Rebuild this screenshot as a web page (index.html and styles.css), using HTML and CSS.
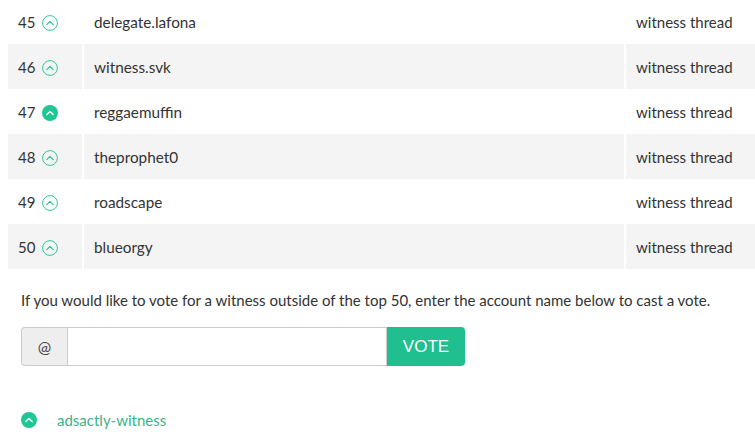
FILE: index.html
```html
<!DOCTYPE html>
<html>
<head>
<meta charset="utf-8">
<link rel="stylesheet" href="styles.css">
</head>
<body>
<div class="page">
  <table class="witnesses">
    <tbody>
      <tr>
        <td class="rank">45 <span class="vote"><svg viewBox="0 0 16 16"><circle cx="8" cy="8" r="7.4" fill="none" stroke="#2ec89c" stroke-width="1"/><path d="M4.8 9.6 L8 6.4 L11.2 9.6" fill="none" stroke="#2ec89c" stroke-width="1.3" stroke-linecap="round" stroke-linejoin="round"/></svg></span></td>
        <td class="name">delegate.lafona</td>
        <td class="thread">witness thread</td>
      </tr>
      <tr class="alt">
        <td class="rank">46 <span class="vote"><svg viewBox="0 0 16 16"><circle cx="8" cy="8" r="7.4" fill="none" stroke="#2ec89c" stroke-width="1"/><path d="M4.8 9.6 L8 6.4 L11.2 9.6" fill="none" stroke="#2ec89c" stroke-width="1.3" stroke-linecap="round" stroke-linejoin="round"/></svg></span></td>
        <td class="name">witness.svk</td>
        <td class="thread">witness thread</td>
      </tr>
      <tr>
        <td class="rank">47 <span class="vote"><svg viewBox="0 0 16 16"><circle cx="8" cy="8" r="8" fill="#1fc795"/><path d="M4.8 9.6 L8 6.4 L11.2 9.6" fill="none" stroke="#fff" stroke-width="1.4" stroke-linecap="round" stroke-linejoin="round"/></svg></span></td>
        <td class="name">reggaemuffin</td>
        <td class="thread">witness thread</td>
      </tr>
      <tr class="alt">
        <td class="rank">48 <span class="vote"><svg viewBox="0 0 16 16"><circle cx="8" cy="8" r="7.4" fill="none" stroke="#2ec89c" stroke-width="1"/><path d="M4.8 9.6 L8 6.4 L11.2 9.6" fill="none" stroke="#2ec89c" stroke-width="1.3" stroke-linecap="round" stroke-linejoin="round"/></svg></span></td>
        <td class="name">theprophet0</td>
        <td class="thread">witness thread</td>
      </tr>
      <tr>
        <td class="rank">49 <span class="vote"><svg viewBox="0 0 16 16"><circle cx="8" cy="8" r="7.4" fill="none" stroke="#2ec89c" stroke-width="1"/><path d="M4.8 9.6 L8 6.4 L11.2 9.6" fill="none" stroke="#2ec89c" stroke-width="1.3" stroke-linecap="round" stroke-linejoin="round"/></svg></span></td>
        <td class="name">roadscape</td>
        <td class="thread">witness thread</td>
      </tr>
      <tr class="alt">
        <td class="rank">50 <span class="vote"><svg viewBox="0 0 16 16"><circle cx="8" cy="8" r="7.4" fill="none" stroke="#2ec89c" stroke-width="1"/><path d="M4.8 9.6 L8 6.4 L11.2 9.6" fill="none" stroke="#2ec89c" stroke-width="1.3" stroke-linecap="round" stroke-linejoin="round"/></svg></span></td>
        <td class="name">blueorgy</td>
        <td class="thread">witness thread</td>
      </tr>
    </tbody>
  </table>

  <p class="hint">If you would like to vote for a witness outside of the top 50, enter the account name below to cast a vote.</p>

  <form class="vote-form">
    <span class="addon">@</span>
    <input class="account" type="text">
    <button class="vote-btn" type="button">VOTE</button>
  </form>

  <div class="voted">
    <span class="vote"><svg viewBox="0 0 16 16"><circle cx="8" cy="8" r="8" fill="#1fc795"/><path d="M4.8 9.6 L8 6.4 L11.2 9.6" fill="none" stroke="#fff" stroke-width="1.4" stroke-linecap="round" stroke-linejoin="round"/></svg></span>
    <a class="voted-name">adsactly-witness</a>
  </div>
</div>
</body>
</html>
```

FILE: styles.css
```css
html, body {
  margin: 0;
  padding: 0;
  background: #fff;
}
body {
  font-family: "Lato", "Open Sans", sans-serif;
  font-size: 15px;
  color: #333;
  overflow: hidden;
}
.page {
  padding-left: 8px;
}
.witnesses {
  border-collapse: collapse;
  width: 747px;
  margin-top: -1px;
}
.witnesses td {
  height: 45px;
  padding: 0 10px;
  box-sizing: border-box;
  vertical-align: middle;
  border-left: 2px solid #fff;
}
.witnesses td:first-child {
  border-left: 0;
}
.witnesses tr.alt td {
  background: #f4f4f4;
}
.name {
  font-size: 15.3px;
}
.rank {
  width: 75px;
  white-space: nowrap;
}
.thread {
  width: 130px;
}
.vote {
  display: inline-block;
  width: 16px;
  height: 16px;
  vertical-align: -3px;
  margin-left: 3px;
}
.vote svg {
  display: block;
  width: 16px;
  height: 16px;
}
.hint {
  margin: 21px 0 0 13px;
  line-height: 20px;
}
.vote-form {
  display: flex;
  margin: 17px 0 0 13px;
  height: 39px;
}
.addon {
  width: 46px;
  box-sizing: border-box;
  border: 1px solid #ccc;
  border-right: 0;
  background: #eee;
  border-radius: 4px 0 0 4px;
  display: flex;
  align-items: center;
  justify-content: center;
  font-size: 16px;
  color: #444;
}
.account {
  width: 320px;
  box-sizing: border-box;
  border: 1px solid #ccc;
  margin: 0;
  padding: 0 10px;
  font: inherit;
}
.vote-btn {
  width: 78px;
  border: 0;
  margin: 0;
  background: #1fbf8f;
  color: #fff;
  border-radius: 0 4px 4px 0;
  font-family: "Liberation Sans", Arial, sans-serif;
  font-size: 17px;
  padding: 0;
}
.voted {
  display: flex;
  align-items: center;
  margin: 45px 0 0 13px;
}
.voted .vote {
  margin-left: 0;
}
.voted-name {
  margin-left: 20px;
  color: #3cb38a;
}
```
